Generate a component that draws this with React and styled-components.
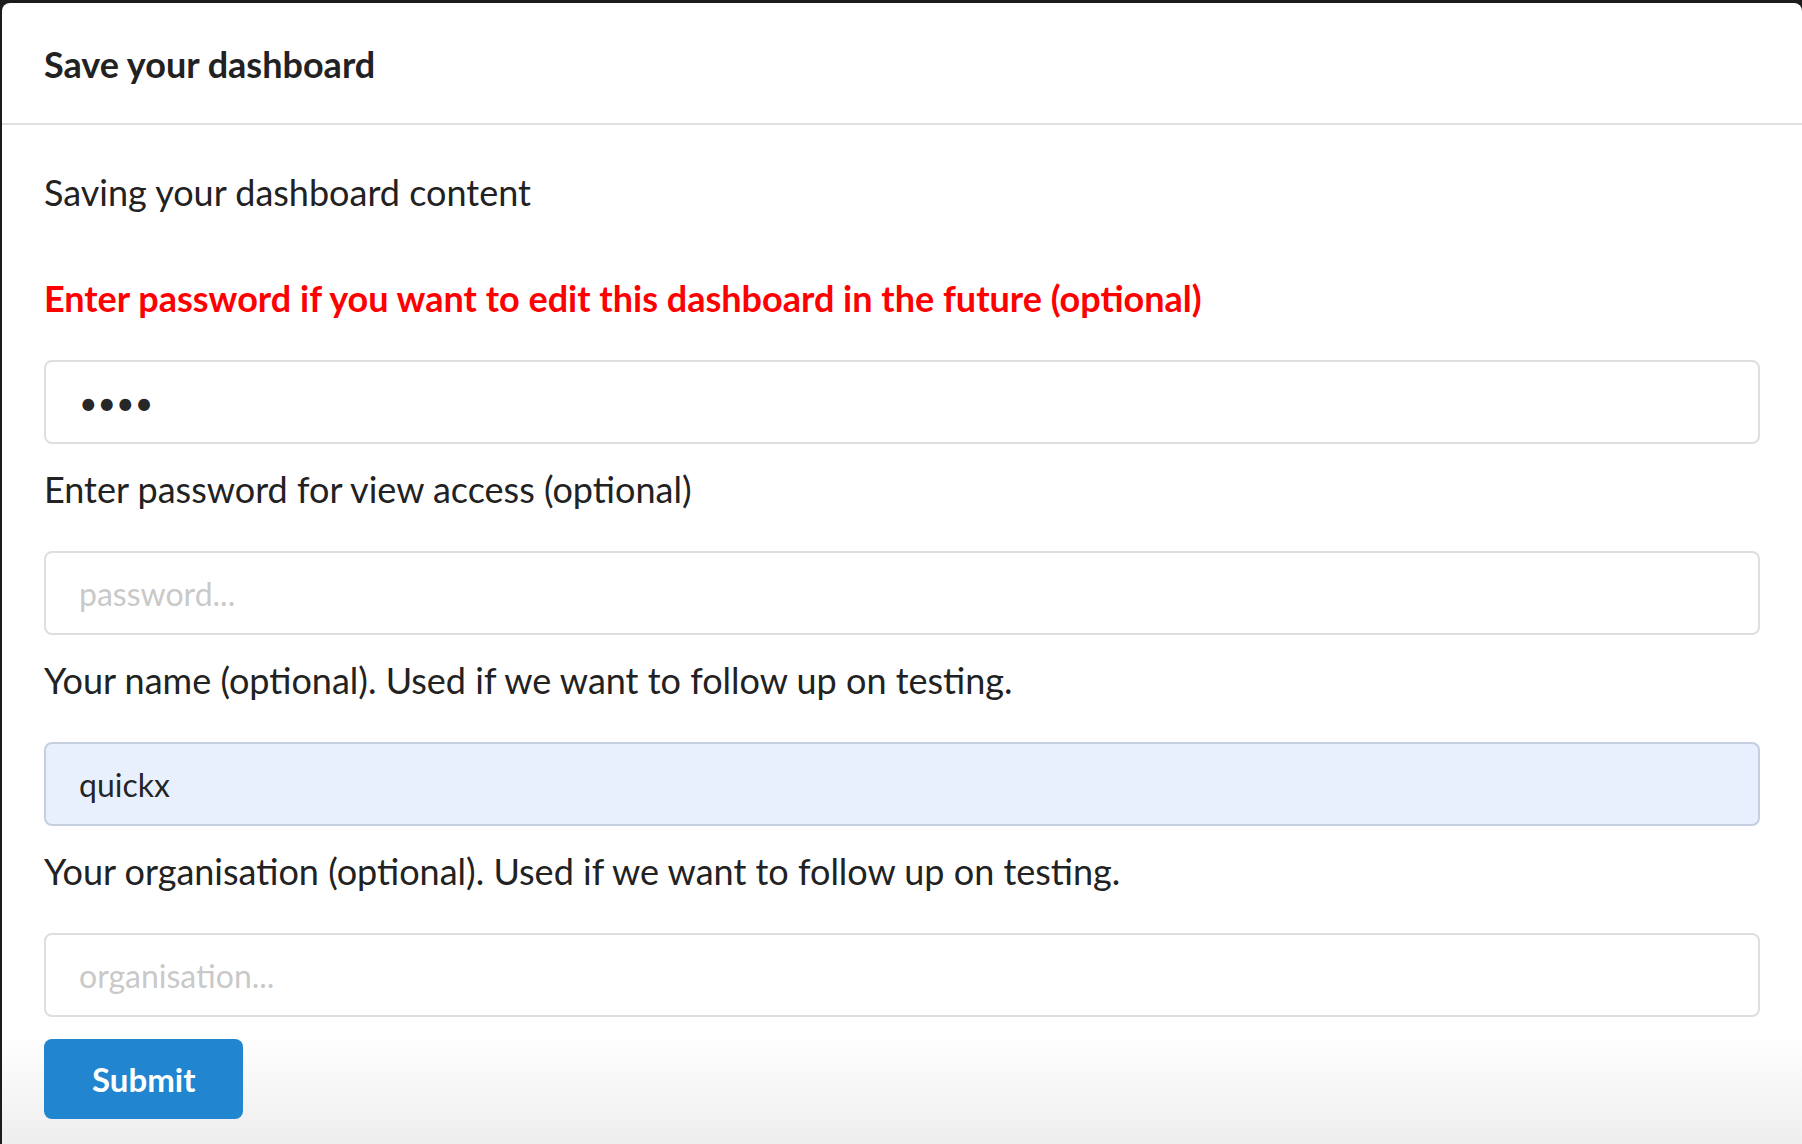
import React from 'react';
import styled, { createGlobalStyle } from 'styled-components';

const GlobalStyle = createGlobalStyle`
  html, body, #root {
    height: 100%;
  }
  body {
    margin: 0;
    background: #1c1c1c;
    font-family: Lato, "Open Sans", sans-serif;
    overflow: hidden;
  }
`;

const Modal = styled.div`
  box-sizing: border-box;
  margin: 3px 0 0 2px;
  height: calc(100% - 3px);
  background: linear-gradient(to bottom, #ffffff calc(100% - 110px), #eeeeee 100%);
  border-radius: 8px 8px 0 0;
  color: rgba(0, 0, 0, 0.87);
`;

const Header = styled.div`
  padding: 36px 42px 33px;
  border-bottom: 2px solid #e0e0e0;
`;

const Title = styled.h2`
  margin: 0;
  font-size: 36px;
  line-height: 51px;
  font-weight: 700;
  color: #222;
`;

const Content = styled.div`
  padding: 43px 42px 0;
  display: flex;
  flex-direction: column;
`;

const Intro = styled.p`
  margin: 0 0 58px;
  font-size: 36px;
  line-height: 48px;
  color: #222;
`;

const Label = styled.label`
  display: block;
  margin: 0 0 38px;
  font-size: 36px;
  line-height: 48px;
  font-weight: ${({ $strong }) => ($strong ? 700 : 400)};
  color: ${({ $strong }) => ($strong ? '#ff0000' : '#222')};
`;

const Input = styled.input`
  box-sizing: border-box;
  display: block;
  width: 100%;
  height: 84px;
  margin: 0 0 21px;
  padding: 0 33px;
  font-family: Lato, "Open Sans", sans-serif;
  font-size: 32px;
  color: rgba(0, 0, 0, 0.87);
  background: ${({ $filled }) => ($filled ? '#e8f0fe' : '#ffffff')};
  border: 2px solid ${({ $filled }) => ($filled ? '#c6cfe0' : '#dedede')};
  border-radius: 8px;
  outline: none;

  &::placeholder {
    color: rgba(191, 191, 191, 0.87);
  }
`;

const SubmitButton = styled.button`
  align-self: flex-start;
  height: 80px;
  margin-top: 1px;
  padding: 0 48px;
  border: none;
  border-radius: 8px;
  background: #2185d0;
  color: #fff;
  font-family: Lato, "Open Sans", sans-serif;
  font-size: 33px;
  font-weight: 700;
  cursor: pointer;
`;

const fields = [
  { label: 'Enter password for view access (optional)', type: 'password', placeholder: 'password...' },
  { label: 'Your name (optional). Used if we want to follow up on testing.', type: 'text', placeholder: 'name...', value: 'quickx' },
  { label: 'Your organisation (optional). Used if we want to follow up on testing.', type: 'text', placeholder: 'organisation...' },
];

export default function App() {
  return (
    <>
      <GlobalStyle />
      <Modal>
        <Header>
          <Title>Save your dashboard</Title>
        </Header>
        <Content>
          <Intro>Saving your dashboard content</Intro>
          <Label $strong>Enter password if you want to edit this dashboard in the future (optional)</Label>
          <Input type="password" defaultValue="1234" placeholder="password..." />
          {fields.map((f) => (
            <React.Fragment key={f.label}>
              <Label>{f.label}</Label>
              <Input
                type={f.type}
                placeholder={f.placeholder}
                defaultValue={f.value || ''}
                $filled={!!f.value}
              />
            </React.Fragment>
          ))}
          <SubmitButton>Submit</SubmitButton>
        </Content>
      </Modal>
    </>
  );
}
